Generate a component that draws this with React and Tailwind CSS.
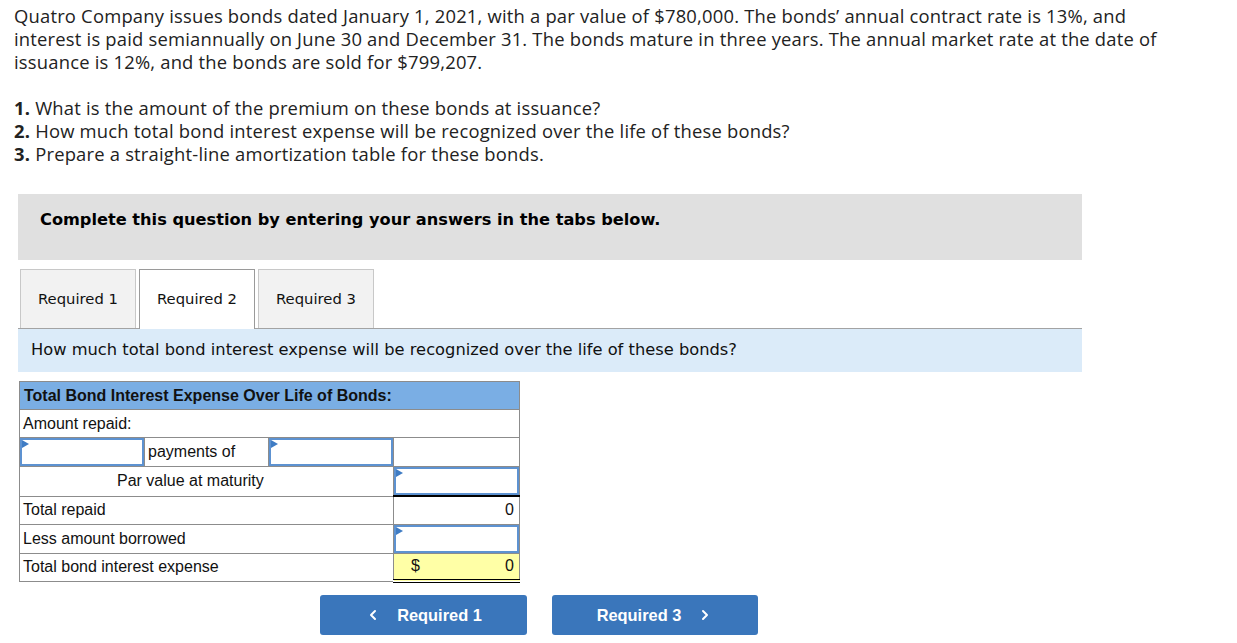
import React from 'react';
import { ChevronLeft, ChevronRight } from 'lucide-react';

const td = 'border border-[#8c8c8c] p-0 h-[28px] align-middle';

function Entry() {
    return (
        <div className="relative h-[28px] border-2 border-[#5d92d1] bg-white">
            <span className="absolute left-0 top-0 h-0 w-0 border-y-[4px] border-l-[7px] border-y-transparent border-l-[#3f7cc4]" />
        </div>
    );
}

export default function App() {
    return (
        <div className="min-h-[643px] bg-white text-[#222]">
            <div className="pl-[14px] pt-[4px] font-[family-name:'Open_Sans',Arial,sans-serif] text-[18.4px] leading-[23px] tracking-[0.2px]">
                <p>
                    Quatro Company issues bonds dated January 1, 2021, with a par value of $780,000. The bonds’ annual contract rate is 13%, and
                    <br />
                    interest is paid semiannually on June 30 and December 31. The bonds mature in three years. The annual market rate at the date of
                    <br />
                    issuance is 12%, and the bonds are sold for $799,207.
                </p>
                <ol className="mt-[23px]">
                    <li><b>1.</b> What is the amount of the premium on these bonds at issuance?</li>
                    <li><b>2.</b> How much total bond interest expense will be recognized over the life of these bonds?</li>
                    <li><b>3.</b> Prepare a straight-line amortization table for these bonds.</li>
                </ol>
            </div>

            <div className="ml-[18px] mt-[29px] w-[1064px] font-[family-name:'DejaVu_Sans',Verdana,sans-serif]">
                <div className="h-[66px] bg-[#e0e0e0] pl-[22px] pt-[16px] text-[16.2px] font-bold leading-[20px] text-black">
                    Complete this question by entering your answers in the tabs below.
                </div>

                <div className="mt-[9px] flex gap-[3px] border-b border-[#a3a3a3] pl-[2px] text-[14.8px] text-[#111]">
                    <div className="flex h-[59px] w-[116px] items-center justify-center border border-b-0 border-[#c8c8c8] bg-[#f2f2f2]">
                        Required 1
                    </div>
                    <div className="-mb-px flex h-[60px] w-[116px] items-center justify-center border border-b-0 border-[#9a9a9a] bg-white">
                        Required 2
                    </div>
                    <div className="flex h-[59px] w-[116px] items-center justify-center border border-b-0 border-[#c8c8c8] bg-[#f2f2f2]">
                        Required 3
                    </div>
                </div>

                <div className="flex h-[43px] items-center bg-[#dbebf9] pl-[13px] text-[16.3px] text-[#111]">
                    How much total bond interest expense will be recognized over the life of these bonds?
                </div>
            </div>

            <table className="ml-[19px] mt-[9px] w-[500px] table-fixed border-collapse border border-[#8c8c8c] font-[family-name:'Liberation_Sans',Arial,sans-serif] text-[16px] text-[#111]">
                <colgroup>
                    <col className="w-[125px]" />
                    <col className="w-[124px]" />
                    <col className="w-[125px]" />
                    <col className="w-[126px]" />
                </colgroup>
                <tbody>
                    <tr>
                        <td colSpan={4} className="h-[28px] border border-[#8c8c8c] bg-[#7aaee4] px-[4px] font-bold">
                            Total Bond Interest Expense Over Life of Bonds:
                        </td>
                    </tr>
                    <tr>
                        <td colSpan={4} className={`${td} px-[3px]`}>Amount repaid:</td>
                    </tr>
                    <tr>
                        <td className={td}><Entry /></td>
                        <td className={`${td} px-[3px]`}>payments of</td>
                        <td className={td}><Entry /></td>
                        <td className={td}></td>
                    </tr>
                    <tr>
                        <td colSpan={3} className={`${td} pl-[97px]`}>Par value at maturity</td>
                        <td className={td}><Entry /></td>
                    </tr>
                    <tr>
                        <td colSpan={3} className={`${td} px-[3px]`}>Total repaid</td>
                        <td className={`${td} border-t-2 border-t-black px-[5px] text-right`}>0</td>
                    </tr>
                    <tr>
                        <td colSpan={3} className={`${td} px-[3px]`}>Less amount borrowed</td>
                        <td className={td}><Entry /></td>
                    </tr>
                    <tr>
                        <td colSpan={3} className={`${td} px-[3px]`}>Total bond interest expense</td>
                        <td className={`${td} border-b-4 border-double border-b-black bg-[#ffffa6] px-[5px]`}>
                            <div className="flex justify-between pl-[12px]">
                                <span>$</span>
                                <span>0</span>
                            </div>
                        </td>
                    </tr>
                </tbody>
            </table>

            <div className="ml-[320px] mt-[12px] flex gap-[25px] font-[family-name:'Liberation_Sans',Arial,sans-serif] text-[16.4px] font-bold text-white">
                <button className="flex h-[40px] w-[207px] items-center justify-center gap-[16px] rounded-[3px] bg-[#3a76bb]">
                    <ChevronLeft size={16} strokeWidth={3} />
                    Required 1
                </button>
                <button className="flex h-[40px] w-[206px] items-center justify-center gap-[16px] rounded-[3px] bg-[#3a76bb]">
                    Required 3
                    <ChevronRight size={16} strokeWidth={3} />
                </button>
            </div>
        </div>
    );
}
